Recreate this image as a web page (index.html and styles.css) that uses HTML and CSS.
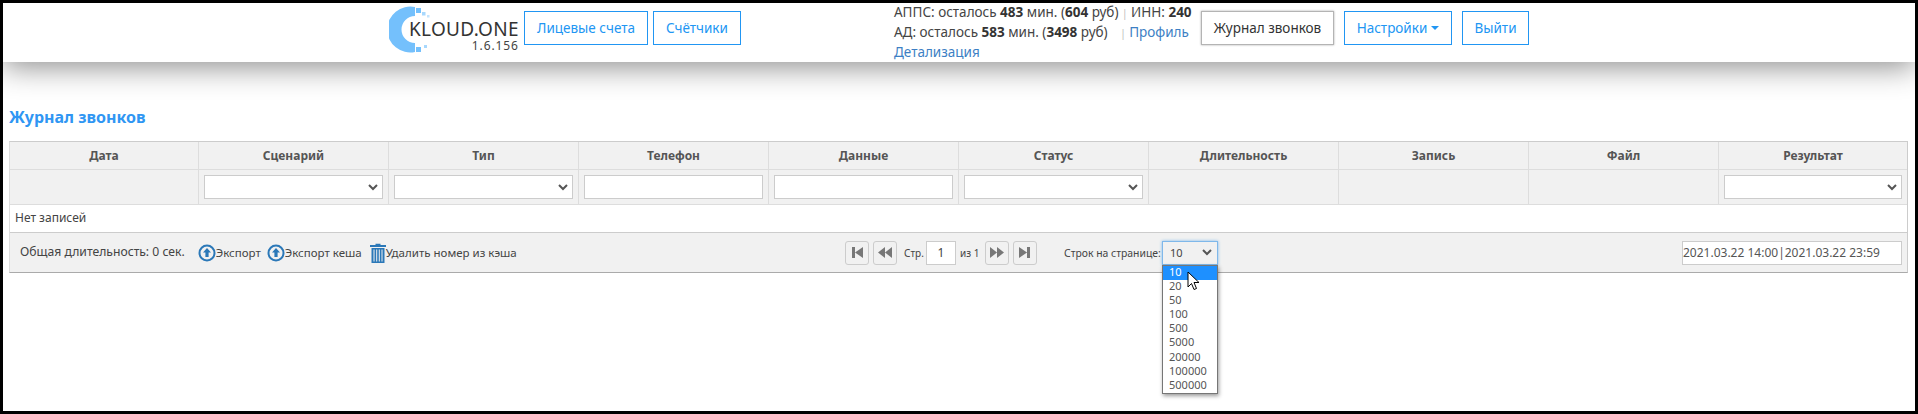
FILE: index.html
```html
<!DOCTYPE html>
<html lang="ru">
<head>
  <meta charset="UTF-8" />
  <title>Журнал звонков</title>
  <link rel="stylesheet" href="styles.css">
</head>
<body>
<div class="frame">

  <header class="topbar">
    <div class="logo">
      <svg class="logo-mark" width="46" height="47" viewBox="0 0 46 47">
        <path d="M26 1 A23 23 0 1 0 26 46 L26 37 A13.500 13.500 0 0 1 26 10 Z" fill="#74c0fc"/>
        <rect x="27" y="2" width="5" height="5" fill="#74c0fc"/>
        <rect x="33" y="6" width="3.500" height="3.500" fill="#a8d8fd"/>
        <rect x="38" y="9" width="2.500" height="2.500" fill="#c4e4fd"/>
        <rect x="27" y="41" width="5" height="5" fill="#74c0fc"/>
        <rect x="35" y="39" width="3" height="3" fill="#a8d8fd"/>
      </svg>
      <div class="logo-text">
        <div class="logo-name">KLOUD.ONE</div>
        <div class="logo-version">1.6.156</div>
      </div>
    </div>
    <a class="btn btn-accounts">Лицевые счета</a>
    <a class="btn btn-counters">Счётчики</a>
    <div class="balance">
      <div>АППС: осталось <b>483</b> мин. (<b>604</b> руб) <span class="sep">|</span> ИНН: <b>240</b></div>
      <div>АД: осталось <b>583</b> мин. (<b>3498</b> руб) <span class="sep sep-wide">|</span> <a class="link">Профиль</a></div>
      <div><a class="link">Детализация</a></div>
    </div>
    <a class="btn btn-active">Журнал звонков</a>
    <a class="btn btn-settings">Настройки <i class="caret"></i></a>
    <a class="btn btn-exit">Выйти</a>
  </header>

  <main class="content">
    <h1 class="page-title">Журнал звонков</h1>

    <div class="grid-box">
      <div class="grid-row head">
        <div class="cell">Дата</div>
        <div class="cell">Сценарий</div>
        <div class="cell">Тип</div>
        <div class="cell">Телефон</div>
        <div class="cell">Данные</div>
        <div class="cell">Статус</div>
        <div class="cell">Длительность</div>
        <div class="cell">Запись</div>
        <div class="cell">Файл</div>
        <div class="cell">Результат</div>
      </div>
      <div class="grid-row filters">
        <div class="cell"></div>
        <div class="cell"><div class="field"><svg width="10" height="7" viewBox="0 0 10 7"><path d="M1 1l4 4 4-4" fill="none" stroke="#555" stroke-width="2"/></svg></div></div>
        <div class="cell"><div class="field"><svg width="10" height="7" viewBox="0 0 10 7"><path d="M1 1l4 4 4-4" fill="none" stroke="#555" stroke-width="2"/></svg></div></div>
        <div class="cell"><div class="field"></div></div>
        <div class="cell"><div class="field"></div></div>
        <div class="cell"><div class="field"><svg width="10" height="7" viewBox="0 0 10 7"><path d="M1 1l4 4 4-4" fill="none" stroke="#555" stroke-width="2"/></svg></div></div>
        <div class="cell"></div>
        <div class="cell"></div>
        <div class="cell"></div>
        <div class="cell"><div class="field"><svg width="10" height="7" viewBox="0 0 10 7"><path d="M1 1l4 4 4-4" fill="none" stroke="#555" stroke-width="2"/></svg></div></div>
      </div>
      <div class="empty">Нет записей</div>

      <div class="pager">
        <div class="pager-left">
          <span class="total">Общая длительность: 0 сек.</span>
          <span class="action">
            <svg width="18" height="18" viewBox="0 0 18 18"><circle cx="9" cy="9" r="7.500" fill="none" stroke="#2b78b8" stroke-width="2"/><path d="M9 4l4 4.500h-2.400V13H7.400V8.500H5z" fill="#2b78b8"/></svg>Экспорт
          </span>
          <span class="action">
            <svg width="18" height="18" viewBox="0 0 18 18"><circle cx="9" cy="9" r="7.500" fill="none" stroke="#2b78b8" stroke-width="2"/><path d="M9 4l4 4.500h-2.400V13H7.400V8.500H5z" fill="#2b78b8"/></svg>Экспорт кеша
          </span>
          <span class="action action-trash">
            <svg width="16" height="20" viewBox="0 0 16 20"><path d="M5.500 2V0.700h5V2H16v2H0V2z" fill="#2b78b8"/><path d="M1.500 5h13v15h-13z" fill="#2b78b8"/><path d="M4 6.500v12M6.700 6.500v12M9.300 6.500v12M12 6.500v12" stroke="#f1f1f1" stroke-width="1"/></svg>Удалить номер из кэша
          </span>
        </div>

        <div class="pager-nav">
          <span class="page-btn"><svg width="14" height="13" viewBox="0 0 14 13"><path d="M2 1h3v11H2z M13 1v11L5 6.500z" fill="#777"/></svg></span>
          <span class="page-btn"><svg width="16" height="13" viewBox="0 0 16 13"><path d="M8 1v11L1 6.500z M15 1v11L8 6.500z" fill="#777"/></svg></span>
          <span class="page-label page-label-from">Стр.</span>
          <span class="page-input">1</span>
          <span class="page-label page-label-of">из 1</span>
          <span class="page-btn"><svg width="16" height="13" viewBox="0 0 16 13"><path d="M1 1v11l7-5.500z M8 1v11l7-5.500z" fill="#777"/></svg></span>
          <span class="page-btn"><svg width="14" height="13" viewBox="0 0 14 13"><path d="M1 1v11l8-5.500z M9 1h3v11H9z" fill="#777"/></svg></span>
        </div>

        <div class="pager-size">
          <span class="size-label">Строк на странице:</span>
          <div class="size-select">
            <span>10</span>
            <svg width="10" height="7" viewBox="0 0 10 7"><path d="M1 1l4 4 4-4" fill="none" stroke="#555" stroke-width="2"/></svg>
            <ul class="size-menu">
              <li class="selected">10</li>
              <li>20</li>
              <li>50</li>
              <li>100</li>
              <li>500</li>
              <li>5000</li>
              <li>20000</li>
              <li>100000</li>
              <li>500000</li>
            </ul>
            <svg class="cursor" width="13" height="20" viewBox="0 0 13 20"><path d="M1 1v15l3.500-3.500 2.500 6 2.500-1-2.500-6h5z" fill="#fff" stroke="#000" stroke-width="1"/></svg>
          </div>
        </div>

        <div class="pager-range">2021.03.22 14:00|2021.03.22 23:59</div>
      </div>
    </div>
  </main>

</div>
</body>
</html>
```
FILE: styles.css
```css
* {
  box-sizing: border-box;
}
html, body {
  margin: 0;
  height: 100%;
  overflow: hidden;
}
body {
  font-family: "Noto Sans", "Open Sans", sans-serif;
  font-size: 12px;
  color: #444;
  background: #000;
}
a {
  text-decoration: none;
}
.frame {
  height: 408px;
  margin: 3px;
  background: #fff;
}
.topbar {
  display: flex;
  align-items: flex-start;
  height: 59px;
  padding-left: 386px;
  background: #fff;
  box-shadow: 0 5px 30px rgba(0, 0, 0, 0.45);
}
.logo {
  display: flex;
  flex: none;
  width: 135px;
}
.logo-mark {
  flex: none;
  margin-top: 3px;
}
.logo-text {
  margin-left: -26px;
  margin-top: 15px;
}
.logo-name {
  font-size: 19px;
  line-height: 22px;
  letter-spacing: 0.3px;
  color: #333;
}
.logo-version {
  font-size: 12px;
  line-height: 12px;
  text-align: right;
  color: #444;
  letter-spacing: 0.9px;
}
.btn {
  display: flex;
  flex: none;
  align-items: center;
  justify-content: center;
  height: 34px;
  margin-top: 8px;
  border: 1px solid #2196f3;
  color: #2196f3;
  font-size: 13.500px;
}
.btn-accounts {
  width: 124px;
}
.btn-counters {
  width: 88px;
  margin-left: 5px;
}
.balance {
  flex: none;
  width: 307px;
  margin-top: -1px;
  margin-left: 153px;
  font-size: 13.500px;
  line-height: 20px;
  color: #444;
}
.balance b {
  color: #333;
}
.sep {
  color: #bbb;
  font-size: 10px;
  line-height: 1;
}
.sep-wide {
  margin-left: 9px;
}
.link {
  color: #3d7fc4;
}
.btn-active {
  width: 133px;
  border-color: #b4b4b4;
  box-shadow: 0 0 2px #aaa;
  color: #333;
}
.btn-settings {
  width: 108px;
  margin-left: 10px;
  gap: 4px;
}
.caret {
  display: inline-block;
  border-left: 4px solid transparent;
  border-right: 4px solid transparent;
  border-top: 4px solid #2196f3;
}
.btn-exit {
  width: 67px;
  margin-left: 10px;
}
.content {
  padding-left: 6px;
}
.page-title {
  margin: 45px 0 0 0;
  font-size: 16px;
  line-height: 20px;
  font-weight: 700;
  color: #2f96f3;
}
.grid-box {
  margin-top: 14px;
  width: 1899px;
  border: 1px solid #ccc;
  border-bottom-color: #aaa;
  border-left-color: #ddd;
}
.grid-row {
  display: grid;
  grid-template-columns: 189px repeat(8, 190px) 1fr;
  background: #f1f1f1;
  border-bottom: 1px solid #ddd;
}
.grid-row.head {
  height: 28px;
}
.grid-row.filters {
  height: 35px;
}
.cell {
  display: flex;
  align-items: center;
  justify-content: center;
  padding: 0 5px;
  border-right: 1px solid #ddd;
}
.cell:last-child {
  border-right: none;
}
.head .cell {
  font-weight: 700;
  color: #555;
}
.field {
  display: flex;
  align-items: center;
  justify-content: flex-end;
  width: 100%;
  height: 24px;
  padding-right: 4px;
  background: #fff;
  border: 1px solid #ccc;
}
.empty {
  height: 28px;
  padding-left: 5px;
  line-height: 25px;
  background: #fff;
  border-bottom: 1px solid #ccc;
}
.pager {
  display: flex;
  align-items: center;
  height: 39px;
  background: #f1f1f1;
}
.pager-left {
  display: flex;
  flex: none;
  align-items: center;
  width: 835px;
  padding-left: 10px;
}
.total {
  margin-right: 13px;
  padding-bottom: 2px;
  font-size: 12.200px;
}
.action {
  display: inline-flex;
  align-items: center;
  margin-right: 6px;
  font-size: 11.500px;
}
.action-trash {
  margin-left: 2px;
}
.pager-nav {
  display: flex;
  flex: none;
  align-items: center;
  width: 219px;
}
.page-btn {
  display: flex;
  align-items: center;
  justify-content: center;
  width: 24px;
  height: 24px;
  margin-right: 4px;
  border: 1px solid #ccc;
  border-radius: 3px;
}
.page-label {
  font-size: 10px;
}
.page-label-from {
  width: 22px;
  margin-left: 3px;
}
.page-label-of {
  width: 25px;
  margin-left: 4px;
}
.page-input {
  display: flex;
  align-items: center;
  justify-content: center;
  width: 30px;
  height: 24px;
  background: #fff;
  border: 1px solid #ccc;
}
.pager-size {
  display: flex;
  flex: none;
  align-items: center;
}
.size-label {
  width: 98px;
  font-size: 10.400px;
  white-space: nowrap;
}
.size-select {
  position: relative;
  display: flex;
  align-items: center;
  justify-content: space-between;
  width: 56px;
  height: 24px;
  padding: 0 5px 0 7px;
  background: #f1f1f1;
  border: 1px solid #7fb8ea;
  box-shadow: 0 0 3px #7fb8ea;
  font-size: 11px;
}
.size-menu {
  position: absolute;
  left: -1px;
  top: 23px;
  width: 56px;
  margin: 0;
  padding: 0;
  list-style: none;
  background: #fff;
  border: 1px solid #767676;
  box-shadow: 1px 2px 4px rgba(0, 0, 0, 0.4);
}
.size-menu li {
  height: 14.200px;
  line-height: 12px;
  padding-left: 6px;
  color: #555;
}
.size-menu li.selected {
  background: #1e90ff;
  color: #fff;
}
.cursor {
  position: absolute;
  left: 24px;
  top: 29px;
}
.pager-range {
  flex: none;
  width: 220px;
  height: 24px;
  margin-left: auto;
  margin-right: 5px;
  line-height: 22px;
  background: #fff;
  border: 1px solid #ccc;
  font-size: 12px;
  color: #555;
}
```
